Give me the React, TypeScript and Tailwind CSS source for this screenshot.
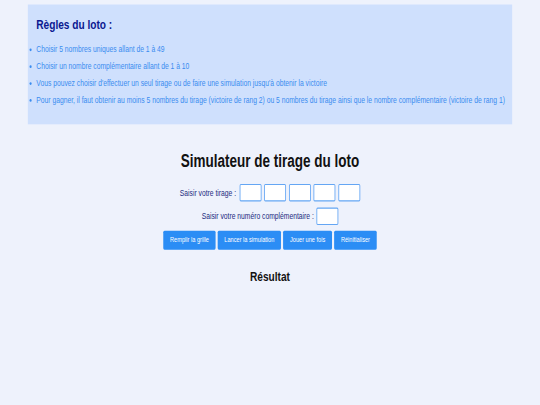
import React from "react";

const rules = [
  "Choisir 5 nombres uniques allant de 1 à 49",
  "Choisir un nombre complémentaire allant de 1 à 10",
  "Vous pouvez choisir d'effectuer un seul tirage ou de faire une simulation jusqu'à obtenir la victoire",
  "Pour gagner, il faut obtenir au moins 5 nombres du tirage (victoire de rang 2) ou 5 nombres du tirage ainsi que le nombre complémentaire (victoire de rang 1)",
];

const actions = ["Remplir la grille", "Lancer la simulation", "Jouer une fois", "Réinitialiser"];

function NumberBox() {
  return (
    <input
      type="text"
      className="w-[52px] h-[31px] bg-white border-2 border-[#64a6f4] rounded-[3px] outline-none"
    />
  );
}

export default function App() {
  return (
    <div className="w-[540px] h-[405px] overflow-hidden bg-[#eef2fc]">
      <div className="w-[1280px] h-[720px] origin-top-left [transform:scale(0.421875,0.5625)] font-['Liberation_Sans',Arial,sans-serif] pt-[8px]">
        <section className="mx-[66px] bg-[#cfe0fd] pt-[21px] pb-[33px] pl-[20px] pr-[4px]">
          <h2 className="text-[24px] leading-[28px] font-bold text-[#0a1890]">Règles du loto :</h2>
          <ul className="mt-[21px] list-disc text-[16px] leading-[20px] text-[#3a8cf0] space-y-[10px]">
            {rules.map((r) => (
              <li key={r}>{r}</li>
            ))}
          </ul>
        </section>

        <main className="mt-[46px] flex flex-col items-center">
          <h1 className="text-[32px] leading-[37px] font-bold text-[#111111]">Simulateur de tirage du loto</h1>

          <div className="mt-[23px] flex items-center">
            <label className="text-[16px] leading-[18px] text-[#1c2a80] mr-[8px]">Saisir votre tirage :</label>
            <div className="flex gap-[6.5px]">
              <NumberBox />
              <NumberBox />
              <NumberBox />
              <NumberBox />
              <NumberBox />
            </div>
          </div>

          <div className="mt-[10.5px] flex items-center">
            <label className="text-[16px] leading-[18px] text-[#1c2a80] mr-[6px]">
              Saisir votre numéro complémentaire :
            </label>
            <NumberBox />
          </div>

          <div className="mt-[10px] flex gap-[5px]">
            {actions.map((a) => (
              <button
                key={a}
                className="h-[34px] px-[16px] rounded-[3px] bg-[#2b8df5] text-white text-[13.333px] leading-[15px]"
              >
                {a}
              </button>
            ))}
          </div>

          <h2 className="mt-[34px] text-[24px] leading-[28px] font-bold text-[#111111]">Résultat</h2>
        </main>
      </div>
    </div>
  );
}
